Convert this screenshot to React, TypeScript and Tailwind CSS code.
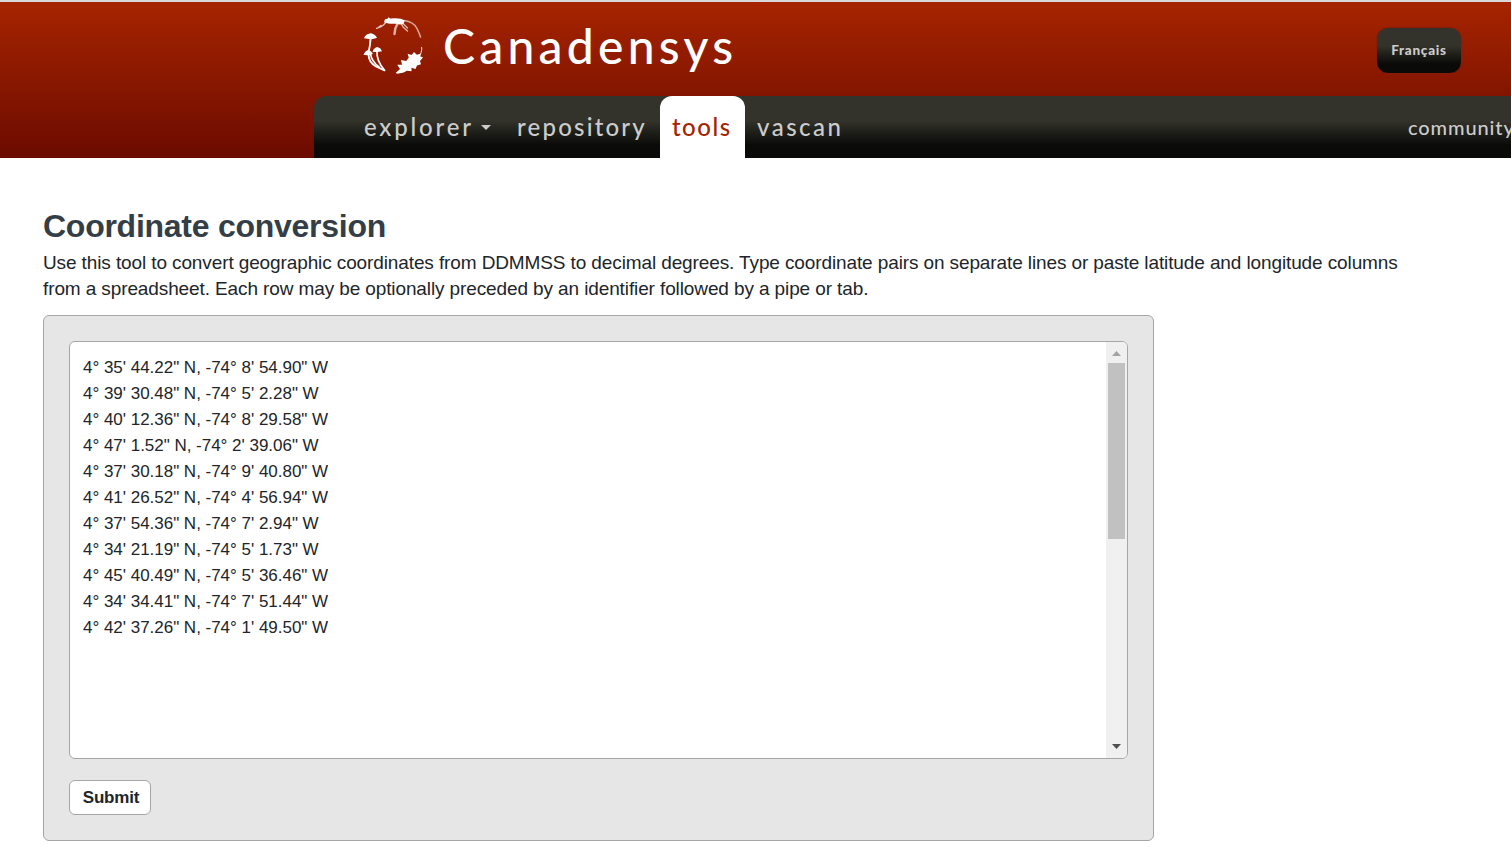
import React from "react";

const rows = [
  `4° 35' 44.22" N, -74° 8' 54.90" W`,
  `4° 39' 30.48" N, -74° 5' 2.28" W`,
  `4° 40' 12.36" N, -74° 8' 29.58" W`,
  `4° 47' 1.52" N, -74° 2' 39.06" W`,
  `4° 37' 30.18" N, -74° 9' 40.80" W`,
  `4° 41' 26.52" N, -74° 4' 56.94" W`,
  `4° 37' 54.36" N, -74° 7' 2.94" W`,
  `4° 34' 21.19" N, -74° 5' 1.73" W`,
  `4° 45' 40.49" N, -74° 5' 36.46" W`,
  `4° 34' 34.41" N, -74° 7' 51.44" W`,
  `4° 42' 37.26" N, -74° 1' 49.50" W`,
];

function Logo() {
  return (
    <svg viewBox="0 0 90 90" className="h-[90px] w-[90px] shrink-0" fill="white">
      {/* insect */}
      <path d="M34 22 L35 19.3 L37.5 18.7 L38.5 17.3 L40 18.5 L45 18.2 L51 18.8 L54.8 20.5 L53.5 24 L50 24.6 L46 23.8 L40 23.8 L36 22.9 Z" />
      <g fill="none" stroke="white" strokeLinecap="round" strokeLinejoin="round">
        <path d="M36 22 L33.5 25 L30.5 27 L26.5 28.3 M31 25.5 L28 27.8" strokeWidth="1.3" opacity=".75" />
        <path d="M47.5 23.8 L45.3 28.5 L44.5 34" strokeWidth="2.4" opacity=".65" />
        <path d="M51 23 L53 27 L57.5 31 M53.5 24 L57.5 28" strokeWidth="1.3" opacity=".7" />
        <path d="M54 20.5 Q64 22 67 28.5 T70.5 37" strokeWidth="1.6" opacity=".6" />
      </g>
      {/* mushrooms */}
      <path d="M14 38.3 Q15 34.3 20.5 33.3 Q25 34 27 37.8 Q24 39 21 39.2 Z" />
      <path d="M13.5 54.8 Q15 50.5 18.5 50 Q21.5 50.8 23 54 Q18 56 13.5 54.8 Z" />
      <path d="M22.5 51.7 Q24 47.5 27.5 47 Q31 48 32 51.3 Q27 52.6 22.5 51.7 Z" />
      <g fill="none" stroke="white" strokeLinecap="round">
        <path d="M20.6 38 Q20.2 46 18.8 51 M18.5 54 Q18.5 62 26 66.5 L34.5 70.3" strokeWidth="1.9" />
        <path d="M20.5 54 Q21.5 61 29 67 M27 51 Q26.5 61 34 69.5" strokeWidth="1.7" />
      </g>
      {/* leaf */}
      <path d="M45.8 72.8 L50 69 L47.2 64.8 L52 64.8 L51 60 L56.3 61 L58.8 57.5 L57.6 53.8 L61.7 55 L64 52 L66.8 54.8 L70.5 53.8 L70.3 56.4 L73 57.3 L70 61 L71 64.3 L67 65.6 L65.5 69 L61.5 67.8 L61.5 71.3 L57 70.7 L53 72.8 L47 73.7 Z" />
      <path d="M69.5 56 Q72.5 51 71.5 47" fill="none" stroke="white" strokeWidth="1.1" opacity=".8" />
    </svg>
  );
}

export default function App() {
  return (
    <div className="h-[847px] w-full overflow-hidden bg-white font-['Liberation_Sans',Arial,sans-serif] text-[#212529]">
      <header className="flex h-[158px] flex-col border-t-2 border-[#d9d9d9] bg-linear-to-b from-[#a62400] to-[#6c0b00] font-[Lato,sans-serif] font-medium">
        <div className="flex h-[94px] items-start pl-[350px]">
          <div className="-mt-0.5">
            <Logo />
          </div>
          <h1 className="w-[310px] whitespace-nowrap pl-[3px] pt-[15px] text-[48px] leading-[58px] tracking-[4.25px] text-white">
            Canadensys
          </h1>
          <button className="ml-auto mr-[49px] mt-[25px] flex h-[47px] w-[86px] items-center justify-center rounded-xl border border-[#8a1c06] bg-linear-to-b from-[#33332b] from-40% to-[#0a0a08] to-80% text-[13.5px] font-black tracking-[.75px] text-[#ccc]">
            Français
          </button>
        </div>
        <nav className="ml-[314px] flex h-[62px] overflow-hidden whitespace-nowrap rounded-tl-xl bg-linear-to-b from-[#33332b] from-40% to-[#0a0a08] to-80% text-[24px] leading-[62px] text-[#ccc]">
          <a className="flex w-[203px] shrink-0 items-center pl-[50px] tracking-[2.8px]">
            explorer
            <span className="ml-[7px] border-x-[5px] border-t-[5px] border-x-transparent border-t-[#ccc]" />
          </a>
          <a className="w-[143px] shrink-0 tracking-[2.2px]">repository</a>
          <a className="w-[85px] shrink-0 rounded-t-xl bg-white pl-3 tracking-[1.5px] text-[#a62400]">tools</a>
          <a className="pl-3 tracking-[2.5px]">vascan</a>
          <a className="ml-auto w-[103px] shrink-0 text-[20px] tracking-[.9px]">community</a>
        </nav>
      </header>

      <main className="px-[43px] pt-[47px]">
        <h2 className="text-[32px] font-bold leading-[42px] tracking-[-.26px] text-[#343e46]">Coordinate conversion</h2>
        <p className="mt-[3px] whitespace-nowrap text-[19px] leading-[26px] tracking-[-.113px]">
          Use this tool to convert geographic coordinates from DDMMSS to decimal degrees. Type coordinate pairs on separate lines or paste latitude and longitude columns
          <br />
          from a spreadsheet. Each row may be optionally preceded by an identifier followed by a pipe or tab.
        </p>
        <form className="mt-[13px] h-[526px] w-[1111px] rounded-md border border-[#a6a6a6] bg-[#e6e6e6] p-[25px]">
          <div className="flex h-[418px] w-[1059px] overflow-hidden rounded-md border border-[#a6a6a6] bg-white">
            <div className="flex-1 pl-[13px] pt-[13px] text-[17px] leading-[26px] tracking-[-.02px]">
              {rows.map((r) => (
                <div key={r}>{r}</div>
              ))}
            </div>
            <div className="flex w-[21px] flex-col items-center bg-[#f0f0f0]">
              <svg viewBox="0 0 9 5" className="mt-[9px] h-[5px] w-[9px]" fill="#a3a3a3">
                <path d="M0 5 4.5 0 9 5Z" />
              </svg>
              <div className="mt-[7px] h-[176px] w-[17px] bg-[#c1c1c1]" />
              <svg viewBox="0 0 9 5" className="mb-[9px] mt-auto h-[5px] w-[9px]" fill="#505050">
                <path d="M0 0 4.5 5 9 0Z" />
              </svg>
            </div>
          </div>
          <button className="mt-[21px] h-[35px] w-[82px] rounded-md border border-[#a6a6a6] bg-white pl-0.5 text-[17px] font-bold tracking-[-.2px]">
            Submit
          </button>
        </form>
      </main>
    </div>
  );
}
